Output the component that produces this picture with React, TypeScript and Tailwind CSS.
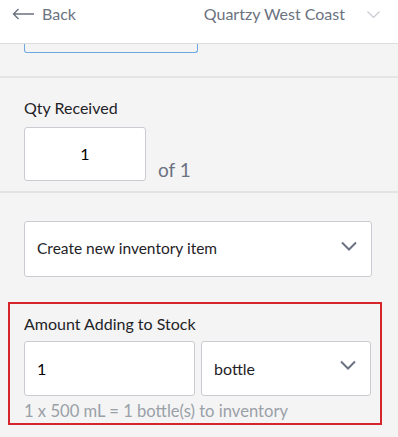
export default function App() {
  const font = { fontFamily: 'Lato, "Open Sans", Arial, sans-serif' }
  return (
    <div className="w-[398px] h-[437px] overflow-hidden bg-[#f4f4f4]" style={font}>
      <div className="h-[44px] bg-white border-b border-[#dedede] flex items-start justify-between pt-[4px] pl-[12px] pr-[18px]">
        <div className="flex items-center gap-[7px] text-[#6b7280] text-[16px] leading-[20px]">
          <svg width="23" height="12" viewBox="0 0 23 12" fill="none" stroke="#6b7280" strokeWidth="1.4">
            <path d="M22 6H1.5M6.5 1L1.5 6l5 5" />
          </svg>
          <span>Back</span>
        </div>
        <div className="flex items-center gap-[22px] text-[#6b7280] text-[16px] leading-[20px]">
          <span>Quartzy West Coast</span>
          <svg width="13" height="7" viewBox="0 0 13 7" fill="none" stroke="#c8ccd2" strokeWidth="1.2">
            <path d="M0.5 0.5l6 6 6-6" />
          </svg>
        </div>
      </div>

      <div className="border-b-2 border-[#e4e4e4] pb-[23px]">
        <div className="ml-[24px] w-[174px] h-[9px] border-x border-b border-[#6ea8e0] rounded-b-[3px]" />
      </div>

      <div className="border-b-2 border-[#e4e4e4] px-[24px] pt-[20px] pb-[10px]">
        <div className="text-[16px] text-[#1f2328] leading-[20px] mb-[9px]">Qty Received</div>
        <div className="flex items-end gap-[12px]">
          <div className="w-[122px] h-[54px] bg-white border border-[#c9ccd1] rounded-[3px] flex items-center justify-center text-[16px] text-black">
            1
          </div>
          <span className="text-[19px] text-[#6b7280] leading-[22px]">of 1</span>
        </div>
      </div>

      <div className="pl-[24px] pt-[28px]">
        <div className="w-[348px] h-[56px] bg-white border border-[#c9ccd1] rounded-[3px] flex items-center justify-between pl-[12px] pr-[14px]">
          <span className="text-[15.5px] text-[#1f2328]">Create new inventory item</span>
          <svg width="16" height="10" viewBox="0 0 16 10" fill="none" stroke="#6b7280" strokeWidth="2" className="mb-[7px]">
            <path d="M1 1.5l7 7 7-7" />
          </svg>
        </div>
      </div>

      <div className="ml-[8px] w-[374px] mt-[25px] border-2 border-[#d7262b] pl-[14px] pt-[10px] pb-[2px]">
        <div className="text-[16px] text-[#1f2328] leading-[20px] mb-[7px]">Amount Adding to Stock</div>
        <div className="flex gap-[6px]">
          <div className="w-[171px] shrink-0 h-[55px] bg-white border border-[#c9ccd1] rounded-[3px] flex items-center pl-[12px] text-[16px] text-black">
            1
          </div>
          <div className="w-[170px] shrink-0 h-[55px] bg-white border border-[#c9ccd1] rounded-[3px] flex items-center justify-between pl-[12px] pr-[14px]">
            <span className="text-[16px] text-[#1f2328]">bottle</span>
            <svg width="16" height="10" viewBox="0 0 16 10" fill="none" stroke="#6b7280" strokeWidth="2" className="mb-[7px]">
              <path d="M1 1.5l7 7 7-7" />
            </svg>
          </div>
        </div>
        <div className="text-[16.6px] text-[#9aa0a8] mt-[5px] leading-[20px]">1 x 500 mL = 1 bottle(s) to inventory</div>
      </div>
    </div>
  )
}
